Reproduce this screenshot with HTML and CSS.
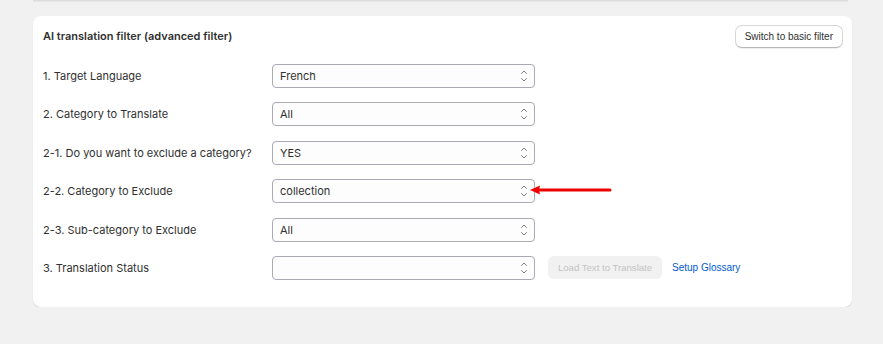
FILE: index.html
```html
<!DOCTYPE html>
<html>
<head>
    <title>AI translation filter</title>
    <link rel="stylesheet" href="styles.css">
</head>
<body>
    <div class="page">
        <div class="prev-card"></div>
        <div class="card">
            <div class="card-header">
                <h2 class="card-title">AI translation filter (advanced filter)</h2>
                <button class="btn-switch">Switch to basic filter</button>
            </div>
            <div class="rows">
                <div class="row">
                    <label class="row-label">1. Target Language</label>
                    <div class="select-wrap">
                        <select><option>French</option></select>
                        <svg class="chev" width="8" height="14" viewBox="0 0 8 14"><path d="M1.5 4.5 L4 2 L6.5 4.5 M1.5 9.5 L4 12 L6.5 9.5" fill="none" stroke="#7a7d80" stroke-width="1" stroke-linecap="round" stroke-linejoin="round"/></svg>
                    </div>
                </div>
                <div class="row">
                    <label class="row-label">2. Category to Translate</label>
                    <div class="select-wrap">
                        <select><option>All</option></select>
                        <svg class="chev" width="8" height="14" viewBox="0 0 8 14"><path d="M1.5 4.5 L4 2 L6.5 4.5 M1.5 9.5 L4 12 L6.5 9.5" fill="none" stroke="#7a7d80" stroke-width="1" stroke-linecap="round" stroke-linejoin="round"/></svg>
                    </div>
                </div>
                <div class="row">
                    <label class="row-label">2-1. Do you want to exclude a category?</label>
                    <div class="select-wrap">
                        <select><option>YES</option></select>
                        <svg class="chev" width="8" height="14" viewBox="0 0 8 14"><path d="M1.5 4.5 L4 2 L6.5 4.5 M1.5 9.5 L4 12 L6.5 9.5" fill="none" stroke="#7a7d80" stroke-width="1" stroke-linecap="round" stroke-linejoin="round"/></svg>
                    </div>
                </div>
                <div class="row">
                    <label class="row-label">2-2. Category to Exclude</label>
                    <div class="select-wrap">
                        <select><option>collection</option></select>
                        <svg class="chev" width="8" height="14" viewBox="0 0 8 14"><path d="M1.5 4.5 L4 2 L6.5 4.5 M1.5 9.5 L4 12 L6.5 9.5" fill="none" stroke="#7a7d80" stroke-width="1" stroke-linecap="round" stroke-linejoin="round"/></svg>
                        <svg class="arrow" width="84" height="12" viewBox="0 0 84 12"><path d="M10 6 H81" stroke="#ee0000" stroke-width="3" stroke-linecap="round"/><path d="M1 6 L11 1.5 L10 6 L11 10.5 Z" fill="#ee0000"/></svg>
                    </div>
                </div>
                <div class="row">
                    <label class="row-label">2-3. Sub-category to Exclude</label>
                    <div class="select-wrap">
                        <select><option>All</option></select>
                        <svg class="chev" width="8" height="14" viewBox="0 0 8 14"><path d="M1.5 4.5 L4 2 L6.5 4.5 M1.5 9.5 L4 12 L6.5 9.5" fill="none" stroke="#7a7d80" stroke-width="1" stroke-linecap="round" stroke-linejoin="round"/></svg>
                    </div>
                </div>
                <div class="row">
                    <label class="row-label">3. Translation Status</label>
                    <div class="select-wrap">
                        <select><option></option></select>
                        <svg class="chev" width="8" height="14" viewBox="0 0 8 14"><path d="M1.5 4.5 L4 2 L6.5 4.5 M1.5 9.5 L4 12 L6.5 9.5" fill="none" stroke="#7a7d80" stroke-width="1" stroke-linecap="round" stroke-linejoin="round"/></svg>
                    </div>
                    <button class="btn-load" disabled>Load Text to Translate</button>
                    <a class="link" href="#">Setup Glossary</a>
                </div>
            </div>
        </div>
    </div>
</body>
</html>
```

FILE: styles.css
```css
body { margin: 0; background: #f1f1f1; font-family: Inter, "Noto Sans", Arial, sans-serif; color: #303030; }
.page { padding: 0 31px 0 33px; }
.prev-card { height: 0; border-bottom: 1px solid #dcdcdc; margin-right: 4px; box-shadow: 0 1px 1px rgba(0,0,0,0.05); }
.card { margin-top: 15px; background: #fff; border-radius: 8px; box-shadow: 0 1px 1px rgba(0,0,0,0.12); padding: 9px 9px 27px 10px; }
.card-header { display: flex; justify-content: space-between; align-items: center; height: 22px; }
.card-title { margin: 0; font-size: 11px; font-weight: 600; color: #303030; }
.btn-switch { font-family: "Liberation Sans", Arial, sans-serif; font-size: 10px; color: #303030; background: #fff; border: 1px solid #d6d6d6; border-bottom-color: #b8b8b8; border-radius: 7px; height: 23px; padding: 0 9px; box-shadow: 0 1px 0 rgba(0,0,0,0.06); white-space: nowrap; }
.rows { display: flex; flex-direction: column; gap: 14.4px; margin-top: 17px; }
.row { display: flex; align-items: center; height: 24px; }
.row-label { width: 229px; font-size: 11px; color: #303030; }
.select-wrap { position: relative; width: 263px; height: 24px; }
.select-wrap select { appearance: none; width: 100%; height: 100%; box-sizing: border-box; border: 1px solid #a8abb3; border-radius: 4px; background: #fdfdfd; font-family: inherit; font-size: 11px; color: #303030; padding: 0 20px 0 7px; }
.chev { position: absolute; right: 7px; top: 5px; }
.arrow { position: absolute; left: 257px; top: 5px; }
.btn-load { margin-left: 13px; font-family: "Liberation Sans", Arial, sans-serif; font-size: 9.6px; color: #c4c4c4; background: #f1f1f1; border: none; border-radius: 6px; width: 114px; height: 23px; padding: 0; white-space: nowrap; }
.link { margin-left: 10px; font-family: "Liberation Sans", Arial, sans-serif; font-size: 10px; color: #005bd3; text-decoration: none; }
```
